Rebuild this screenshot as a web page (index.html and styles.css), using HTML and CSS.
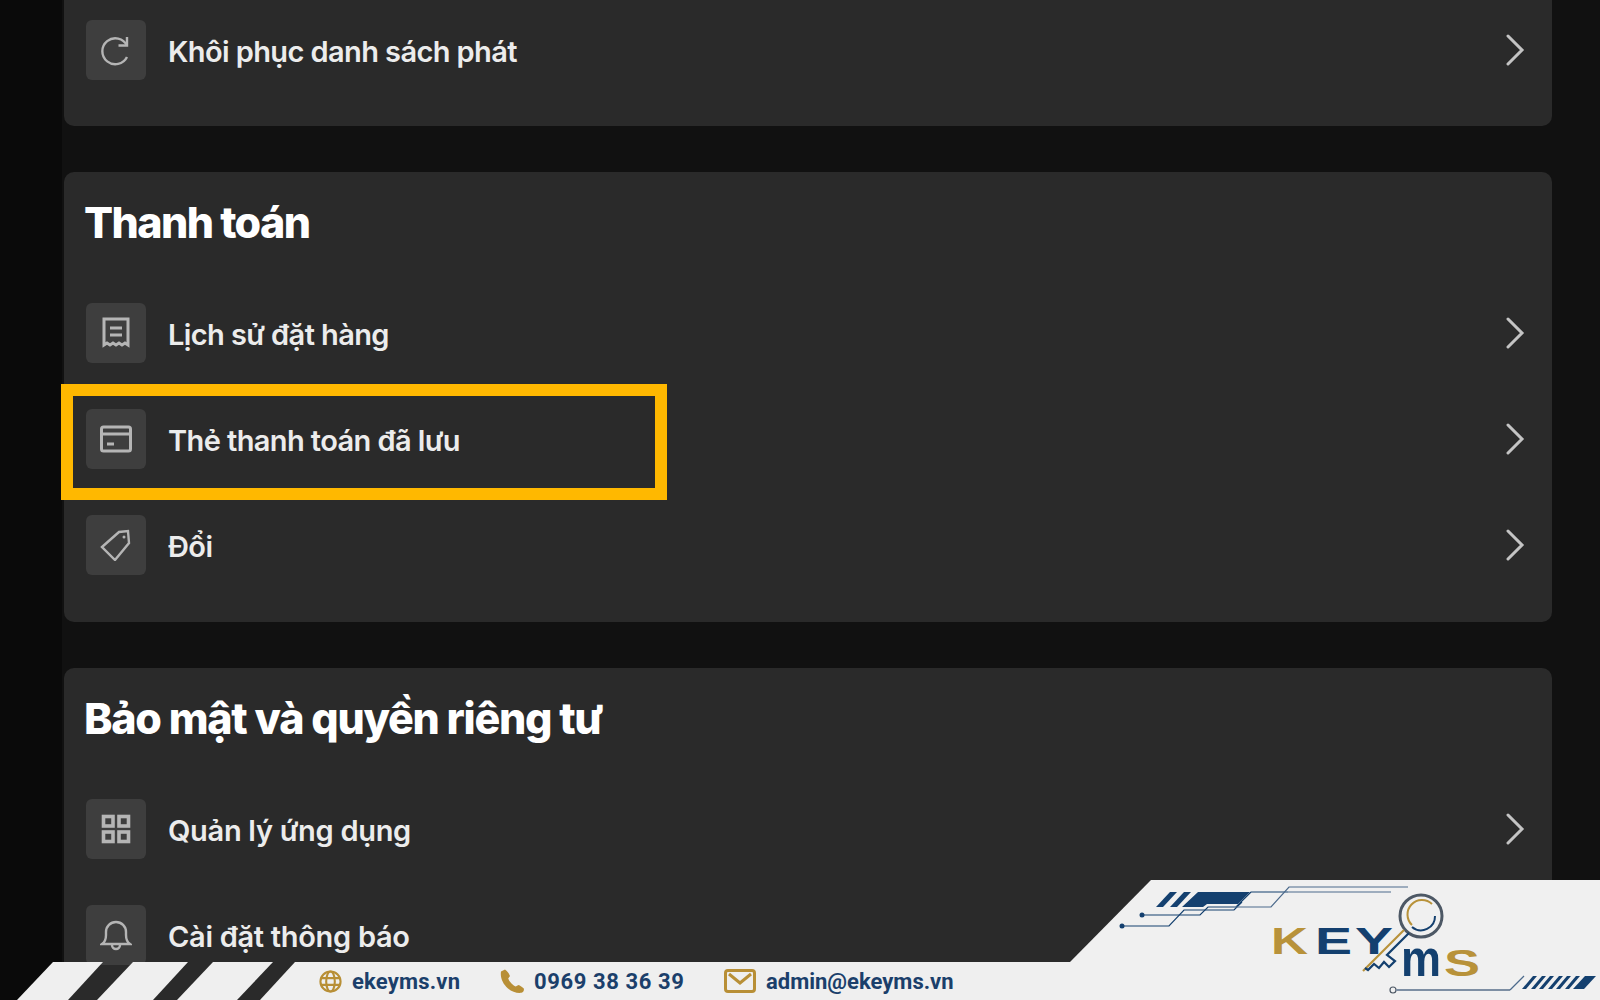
FILE: index.html
```html
<!DOCTYPE html>
<html lang="vi">
<head>
    <meta charset="UTF-8">
    <meta name="viewport" content="width=device-width, initial-scale=1.0">
    <title>Thanh toán</title>
    <link rel="stylesheet" href="styles.css">
</head>
<body>
    <main class="page">
        <section class="card card-cut">
            <div class="row">
                <span class="icon-box">
                    <svg class="icon" viewBox="0 0 32 32"><path d="M27 3v8.500h-8.500"/><path d="M27 11.500A13 13 0 1 0 27 23"/></svg>
                </span>
                <span class="label">Khôi phục danh sách phát</span>
                <svg class="chevron" viewBox="0 0 20 32"><path d="M3 2l14 14L3 30"/></svg>
            </div>
        </section>

        <section class="card">
            <h2>Thanh toán</h2>
            <div class="row">
                <span class="icon-box">
                    <svg class="icon icon-bold" viewBox="0 0 32 32"><path d="M4 2h24v26l-3-2-3 2-3-2-3 2-3-2-3 2-3-2-3 2z"/><path d="M10 11h12M10 18h12"/></svg>
                </span>
                <span class="label">Lịch sử đặt hàng</span>
                <svg class="chevron" viewBox="0 0 20 32"><path d="M3 2l14 14L3 30"/></svg>
            </div>
            <div class="row">
                <span class="icon-box">
                    <svg class="icon icon-bold" viewBox="0 0 32 32"><rect x="1.500" y="4" width="29" height="24" rx="2"/><path d="M1.500 11h29M7 21h7"/></svg>
                </span>
                <span class="label">Thẻ thanh toán đã lưu</span>
                <svg class="chevron" viewBox="0 0 20 32"><path d="M3 2l14 14L3 30"/></svg>
                <span class="highlight"></span>
            </div>
            <div class="row">
                <span class="icon-box">
                    <svg class="icon" viewBox="0 0 32 32"><path d="M2 18L19 3l9-1 1 12L15 31z"/><circle class="dot" cx="24" cy="8" r="1.500"/></svg>
                </span>
                <span class="label">Đổi</span>
                <svg class="chevron" viewBox="0 0 20 32"><path d="M3 2l14 14L3 30"/></svg>
            </div>
        </section>

        <section class="card card-wide">
            <h2>Bảo mật và quyền riêng tư</h2>
            <div class="row">
                <span class="icon-box">
                    <svg class="icon icon-grid" viewBox="0 0 32 32"><rect x="3.500" y="3.500" width="9.500" height="9.500"/><rect x="19" y="3.500" width="9.500" height="9.500"/><rect x="3.500" y="19" width="9.500" height="9.500"/><rect x="19" y="19" width="9.500" height="9.500"/></svg>
                </span>
                <span class="label">Quản lý ứng dụng</span>
                <svg class="chevron" viewBox="0 0 20 32"><path d="M3 2l14 14L3 30"/></svg>
            </div>
            <div class="row">
                <span class="icon-box">
                    <svg class="icon" viewBox="0 0 32 32"><path d="M2 25c3-2 4-5 4-9v-3a10 10 0 0 1 20 0v3c0 4 1 7 4 9z"/><path d="M12 26a4 4 0 0 0 8 0"/></svg>
                </span>
                <span class="label">Cài đặt thông báo</span>
                <svg class="chevron" viewBox="0 0 20 32"><path d="M3 2l14 14L3 30"/></svg>
            </div>
        </section>
    </main>

    <footer class="strip">
        <svg class="stripes" viewBox="0 0 300 38">
            <polygon points="17,38 53,0 103,0 68,38"/>
            <polygon points="97,38 133,0 188,0 153,38"/>
            <polygon points="177,38 213,0 273,0 237,38"/>
            <polygon points="260,38 295,0 300,0 300,38"/>
        </svg>
        <div class="contacts">
            <span class="contact contact-web">
                <svg class="c-icon globe" viewBox="0 0 24 24"><circle cx="12" cy="12" r="10.500"/><ellipse cx="12" cy="12" rx="4.500" ry="10.500"/><path d="M2 8.500h20M2 15.500h20"/></svg>
                ekeyms.vn
            </span>
            <span class="contact contact-phone">
                <svg class="c-icon phone" viewBox="0 0 24 24"><path d="M5 0.500L1 2.500C0 9 3 15 8 19.500c4 3.500 9 4.800 13.500 4.300c2-.5 2.800-2.800 2.300-4.300c-1.300-1.500-3.800-3-5.300-3.500l-2.800 1.500c-2.700-1-6.500-5-7.500-8l1.800-2.500C9.500 5.500 7.500 2 5 0.500z"/></svg>
                0969 38 36 39
            </span>
            <span class="contact contact-mail">
                <svg class="c-icon mail" viewBox="0 0 32 24"><rect x="1.500" y="1.500" width="29" height="21" rx="2.500"/><path d="M5 5l11 9 11-9"/></svg>
                admin@ekeyms.vn
            </span>
        </div>
    </footer>

    <div class="logo-panel">
        <svg class="logo" viewBox="1070 880 530 120">
            <!-- circuit, top left -->
            <polygon class="blue" points="1156,907 1170,892 1177,892 1163,907"/>
            <polygon class="blue" points="1170,907 1184,892 1191,892 1177,907"/>
            <polygon class="blue" points="1182,907 1198,892 1250,892 1238,904 1207,904 1203,907"/>
            <path class="line" d="M1142 915h58l8-8h28l15-15h37"/>
            <path class="line" d="M1122 926h47l15-16h50l8-8"/>
            <path class="line soft" d="M1236 907h35l18-20h119"/>
            <path class="line soft" d="M1288 892h103"/>
            <circle class="blue" cx="1142" cy="915" r="2.500"/>
            <circle class="blue" cx="1122" cy="926" r="2.500"/>

            <!-- wordmark -->
            <text class="mark gold" x="1271" y="954" textLength="37" lengthAdjust="spacingAndGlyphs">K</text>
            <text class="mark blue" x="1315" y="954" textLength="37" lengthAdjust="spacingAndGlyphs">E</text>
            <text class="mark blue" x="1355" y="954" textLength="38" lengthAdjust="spacingAndGlyphs">Y</text>
            <text class="mark mark-m blue" x="1401" y="976" textLength="40" lengthAdjust="spacingAndGlyphs">m</text>
            <text class="mark gold" x="1444" y="976" textLength="36" lengthAdjust="spacingAndGlyphs">S</text>

            <!-- key -->
            <circle class="ring" cx="1421" cy="916" r="21"/>
            <path class="ring-in" d="M1432 904a14 14 0 1 0-20 21"/>
            <path class="ring-blue" d="M1435 916a14 14 0 0 1-23 11"/>
            <path class="shaft gold-line" d="M1404 930l-41 41"/>
            <path class="shaft blue-line" d="M1409 933l-22 22 8 6-6 6-5-5-5 6-5-4-6 6-3-2"/>

            <!-- circuit, bottom right -->
            <circle class="hollow" cx="1393" cy="990" r="3"/>
            <path class="line grey" d="M1396 990h114"/>
            <path class="line soft" d="M1510 990l14-14"/>
            <polygon class="blue" points="1522,989 1533,976 1537,976 1526,989"/>
            <polygon class="blue" points="1531,989 1542,976 1546,976 1535,989"/>
            <polygon class="blue" points="1539,989 1550,976 1554,976 1543,989"/>
            <polygon class="blue" points="1548,989 1559,976 1563,976 1552,989"/>
            <polygon class="blue" points="1556,989 1567,976 1571,976 1560,989"/>
            <polygon class="blue" points="1565,989 1576,976 1580,976 1569,989"/>
            <polygon class="blue" points="1573,989 1585,976 1596,976 1584,989"/>
        </svg>
    </div>
</body>
</html>
```

FILE: styles.css
```css
*{
    margin: 0;
    box-sizing: border-box;
}

html, body{
    height: 100%;
    overflow: hidden;
}

body{
    position: relative;
    background-color: #0a0a0a;
    font-family: "Inter", "Noto Sans", sans-serif;
}

.page{
    display: flex;
    flex-direction: column;
    gap: 46px;
    height: 1000px;
    margin-left: 62px;
    padding-left: 2px;
    background-color: #111;
}

.card{
    display: flex;
    flex-direction: column;
    gap: 46px;
    width: 1488px;
    flex-shrink: 0;
    padding: 0 27px 47px 22px;
    background-color: #2a2a2a;
    border-radius: 10px;
}

.card-cut{
    padding-top: 20px;
    padding-bottom: 46px;
    border-radius: 0 0 10px 10px;
}

.card h2{
    margin: 25px 0 10px -2px;
    color: #fff;
    font-size: 43px;
    line-height: 50px;
    font-weight: 800;
    letter-spacing: -1.6px;
}

.card-wide h2{
    letter-spacing: -1.3px;
}

.row{
    position: relative;
    display: flex;
    align-items: center;
    gap: 22px;
    height: 60px;
}

.icon-box{
    display: flex;
    align-items: center;
    justify-content: center;
    width: 60px;
    height: 60px;
    flex-shrink: 0;
    background-color: #3e3e3e;
    border-radius: 6px;
}

.icon{
    width: 32px;
    height: 32px;
    fill: none;
    stroke: #b5b5b5;
    stroke-width: 2.4;
}

.icon-bold{
    stroke-width: 3;
}

.icon-grid{
    stroke-width: 3.6;
}

.icon .dot{
    fill: #b5b5b5;
    stroke: none;
}

.label{
    flex: 1;
    padding-top: 2px;
    color: #ececec;
    font-size: 29px;
    font-weight: 600;
    letter-spacing: -0.6px;
}

.card-wide .label{
    letter-spacing: -0.3px;
}

.chevron{
    width: 20px;
    height: 32px;
    fill: none;
    stroke: #c4c4c4;
    stroke-width: 3;
    stroke-linecap: round;
}

.highlight{
    position: absolute;
    left: -25px;
    top: -25px;
    width: 606px;
    height: 116px;
    border: 12px solid #ffb800;
}

.strip{
    position: absolute;
    left: 0;
    right: 0;
    bottom: 0;
    display: flex;
    height: 38px;
}

.stripes{
    width: 300px;
    height: 38px;
    flex-shrink: 0;
    fill: #efefef;
}

.contacts{
    display: flex;
    align-items: center;
    flex: 1;
    padding-left: 19px;
    background-color: #efefef;
    color: #1b3f6b;
    font-family: "Roboto", sans-serif;
    font-size: 22px;
    font-weight: 700;
}

.contact{
    display: flex;
    align-items: center;
}

.contact-web{
    gap: 10px;
    letter-spacing: 0.2px;
    width: 181px;
}

.contact-phone{
    gap: 10px;
    letter-spacing: 0.6px;
    width: 224px;
}

.contact-mail{
    gap: 10px;
    letter-spacing: 0;
}

.c-icon{
    flex-shrink: 0;
    fill: none;
    stroke: #b88f36;
}

.globe{
    width: 23px;
    height: 23px;
    stroke-width: 2.2;
}

.phone{
    width: 24px;
    height: 24px;
    fill: #b88f36;
    stroke: none;
}

.mail{
    width: 32px;
    height: 24px;
    stroke-width: 3;
}

.logo-panel{
    position: absolute;
    right: 0;
    bottom: 0;
    width: 530px;
    height: 120px;
    background-color: #f0f0f0;
    clip-path: polygon(81px 0, 100% 0, 100% 100%, 0 100%, 0 82px);
}

.logo{
    display: block;
    width: 530px;
    height: 120px;
}

.logo .blue{
    fill: #14406f;
}

.logo .gold{
    fill: #b8923a;
}

.mark{
    font-family: "Liberation Sans", sans-serif;
    font-size: 36px;
    font-weight: 700;
}

.mark-m{
    font-size: 52px;
}

.line{
    fill: none;
    stroke: #14406f;
    stroke-width: 1.2;
}

.line.soft{
    stroke: #4c6a8c;
}

.line.grey{
    stroke: #7d8ea3;
    stroke-width: 2;
}

.ring{
    fill: none;
    stroke: #4d5865;
    stroke-width: 3;
}

.ring-in{
    fill: none;
    stroke: #b8923a;
    stroke-width: 2;
}

.ring-blue{
    fill: none;
    stroke: #14406f;
    stroke-width: 2;
}

.shaft{
    fill: none;
    stroke-width: 2.2;
}

.gold-line{
    stroke: #b8923a;
}

.blue-line{
    stroke: #14406f;
}

.hollow{
    fill: none;
    stroke: #4d5865;
    stroke-width: 1.2;
}
```
